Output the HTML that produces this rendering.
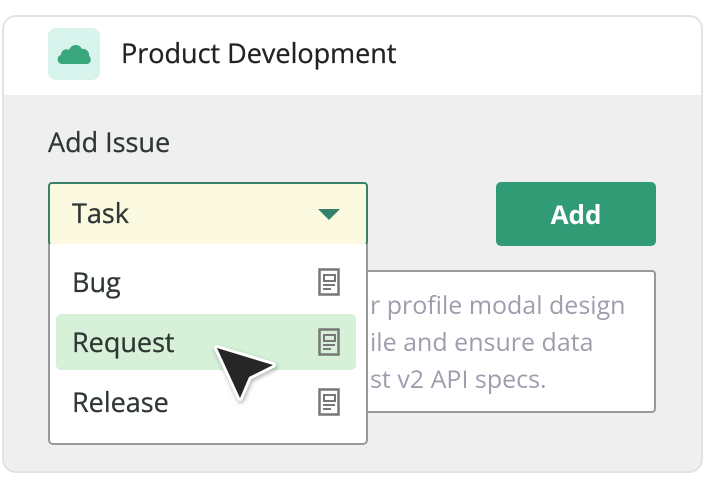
<!DOCTYPE html>
<html><head><meta charset="utf-8"><style>
*{box-sizing:border-box;margin:0;padding:0}
body{width:704px;height:488px;background:#fff;font-family:"Open Sans","Liberation Sans",sans-serif;position:relative;overflow:hidden}
.card{position:absolute;left:2px;top:15px;width:701px;height:458px;border:2px solid #e3e3e3;border-radius:14px;background:#efefef;overflow:hidden}
.head{position:absolute;left:0;top:0;right:0;height:78px;background:#fff}
.abs{position:absolute}
.t{color:#2f3735;font-size:27px;height:36px;line-height:36px;white-space:nowrap;-webkit-text-stroke:0.3px currentColor}
</style></head><body>
<div class="card"><div class="head"></div></div>
<div class="abs" style="left:48px;top:28px;width:52px;height:52px;background:#d9f4ec;border-radius:8px"></div>
<svg class="abs" style="left:56px;top:40px" width="36" height="26" viewBox="0 0 36 26"><path d="M6 24 C1 24 0 16 5 15 C5 10 10 8 13 10 C15 4 23 3 26 9 C30 8 34 12 33 16 C36 18 35 24 31 24 Z" fill="#39a67e"/></svg>
<div class="abs t" style="left:121px;top:35px;color:#222">Product Development</div>
<div class="abs t" style="left:48px;top:124px">Add Issue</div>
<div class="abs" style="left:357px;top:270px;width:299px;height:143px;background:#fff;border:2px solid #9a9a9a;border-radius:4px"></div>
<div class="abs" style="left:370px;top:287px;color:#a09cad;font-size:25px;line-height:37px;white-space:nowrap">r profile modal design<br>ile and ensure data<br>st v2 API specs.</div>
<div class="abs" style="left:48px;top:182px;width:320px;height:64px;background:#fbf9e0;border:2px solid #3a7f68;border-radius:4px"></div>
<div class="abs t" style="left:72px;top:195px">Task</div>
<svg class="abs" style="left:318px;top:209px" width="22" height="11"><path d="M0 0H22L11 11Z" fill="#35806a"/></svg>
<div class="abs" style="left:48px;top:244px;width:320px;height:201px;background:#fff;border:2px solid #9a9a9a;border-top:none;border-radius:0 0 5px 5px"></div>
<div class="abs" style="left:56px;top:314px;width:300px;height:56px;background:#d6f1d8;border-radius:5px"></div>
<div class="abs t" style="left:72px;top:264px">Bug</div>
<div class="abs t" style="left:72px;top:324px">Request</div>
<div class="abs t" style="left:72px;top:384px">Release</div>
<svg width="0" height="0"><defs><g id="ic"><rect x="1.5" y="1.5" width="19" height="25" fill="none" stroke="#777" stroke-width="2.5"/><rect x="6" y="7" width="11" height="6" fill="none" stroke="#777" stroke-width="2"/><path d="M5 17H17M5 21H13" stroke="#777" stroke-width="2"/></g></defs></svg>
<svg class="abs" style="left:318px;top:268px" width="22" height="28"><use href="#ic"/></svg>
<svg class="abs" style="left:318px;top:328px" width="22" height="28"><use href="#ic"/></svg>
<svg class="abs" style="left:318px;top:388px" width="22" height="28"><use href="#ic"/></svg>
<div class="abs" style="left:496px;top:182px;width:160px;height:64px;background:#309b75;border-radius:5px;color:#fff;font-weight:bold;font-size:26px;text-align:center;line-height:64px">Add</div>
<svg class="abs" style="left:0;top:0" width="704" height="488"><path d="M217 348 L273 365 L249 377 L240 398 Z" fill="#262626" stroke="#fff" stroke-width="6" stroke-linejoin="round" paint-order="stroke" style="filter:drop-shadow(1px 2px 2px rgba(0,0,0,.3))"/></svg>
</body></html>
